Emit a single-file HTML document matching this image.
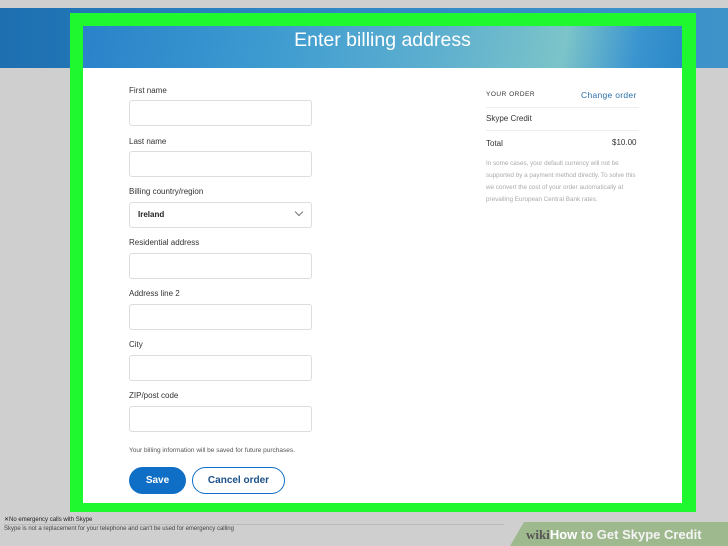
<!DOCTYPE html>
<html><head><style>
body{margin:0;width:728px;height:546px;background:#cfcfcf;position:relative;overflow:hidden;font-family:"Liberation Sans",sans-serif;}
.abs{position:absolute}
.band{left:0;top:8px;width:728px;height:60px;background:linear-gradient(90deg,#1d6fb0,#2f86c4 40%,#3e93c9)}
.green{left:70px;top:13px;width:626px;height:499px;background:#1ff72f}
.inner{left:83px;top:26px;width:599px;height:477px;background:#fff}
.hdr{left:83px;top:26px;width:599px;height:42px;background:linear-gradient(100deg,#2a82c9 0%,#3c9ad0 30%,#5fb0cf 60%,#7cc4c9 80%,#3a94cf 92%,#2c88c8 100%);color:#fff;font-size:20px;font-weight:300;text-align:center;line-height:28px}
.lbl{left:129px;font-size:8px;color:#333}
.inp{left:129px;width:181px;height:24px;border:1px solid #ddd;border-radius:3px;background:#fff}
.r{font-size:8px;color:#333}
</style></head><body>
<div class="abs band"></div>
<div class="abs green"></div>
<div class="abs inner"></div>
<div class="abs hdr" style="font-size:19.5px">Enter billing address</div>

<div class="abs lbl" style="top:86px">First name</div><div class="abs inp" style="top:100px"></div>
<div class="abs lbl" style="top:137px">Last name</div><div class="abs inp" style="top:151px"></div>
<div class="abs lbl" style="top:187px">Billing country/region</div><div class="abs inp" style="top:202px"><span style="position:absolute;left:8px;top:7px;font-size:8px;font-weight:bold;color:#222">Ireland</span><span style="position:absolute;right:9px;top:6px;width:5px;height:5px;border-right:1px solid #777;border-bottom:1px solid #777;transform:rotate(45deg)"></span></div>
<div class="abs lbl" style="top:238px">Residential address</div><div class="abs inp" style="top:253px"></div>
<div class="abs lbl" style="top:289px">Address line 2</div><div class="abs inp" style="top:304px"></div>
<div class="abs lbl" style="top:340px">City</div><div class="abs inp" style="top:355px"></div>
<div class="abs lbl" style="top:391px">ZIP/post code</div><div class="abs inp" style="top:406px"></div>
<div class="abs lbl" style="top:447px;font-size:6.5px;color:#555">Your billing information will be saved for future purchases.</div>
<div class="abs" style="left:129px;top:467px;width:57px;height:27px;border-radius:14px;background:#0f6fc6;color:#fff;font-size:10px;font-weight:bold;text-align:center;line-height:27px">Save</div>
<div class="abs" style="left:192px;top:467px;width:91px;height:25px;border-radius:14px;border:1px solid #0f6fc6;color:#1a4f8a;font-size:10px;font-weight:bold;text-align:center;line-height:25px">Cancel order</div>

<div class="abs r" style="left:486px;top:91px;font-size:6.5px;letter-spacing:.5px">YOUR ORDER</div>
<div class="abs r" style="left:581px;top:90px;font-size:8.5px;color:#2a6fa8;letter-spacing:.3px">Change order</div>
<div class="abs" style="left:486px;top:107px;width:153px;height:1px;background:#eee"></div>
<div class="abs r" style="left:486px;top:114px">Skype Credit</div>
<div class="abs" style="left:486px;top:130px;width:153px;height:1px;background:#eee"></div>
<div class="abs r" style="left:486px;top:139px">Total</div>
<div class="abs r" style="left:612px;top:138px">$10.00</div>
<div class="abs" style="left:486px;top:158px;width:152px;font-size:6.3px;line-height:12px;color:#aaa">In some cases, your default currency will not be supported by a payment method directly. To solve this we convert the cost of your order automatically at prevailing European Central Bank rates.</div>

<div class="abs" style="left:4px;top:516px;font-size:6px;color:#222">✕No emergency calls with Skype</div>
<div class="abs" style="left:4px;top:526px;font-size:6px;color:#444">Skype is not a replacement for your telephone and can't be used for emergency calling</div>
<div class="abs" style="left:4px;top:524px;width:500px;height:1px;background:#bbb"></div>
<div class="abs" style="left:510px;top:522px;width:218px;height:24px;background:#9fb98f;clip-path:polygon(14px 0,100% 0,100% 100%,0 100%)"></div>
<div class="abs" style="left:526px;top:527px;font-size:13px;font-weight:bold;color:#f4f4f4;white-space:nowrap"><span style="font-family:'Liberation Serif',serif;color:#555">wiki</span><span style="color:#fff">How</span> to Get Skype Credit</div>
</body></html>
